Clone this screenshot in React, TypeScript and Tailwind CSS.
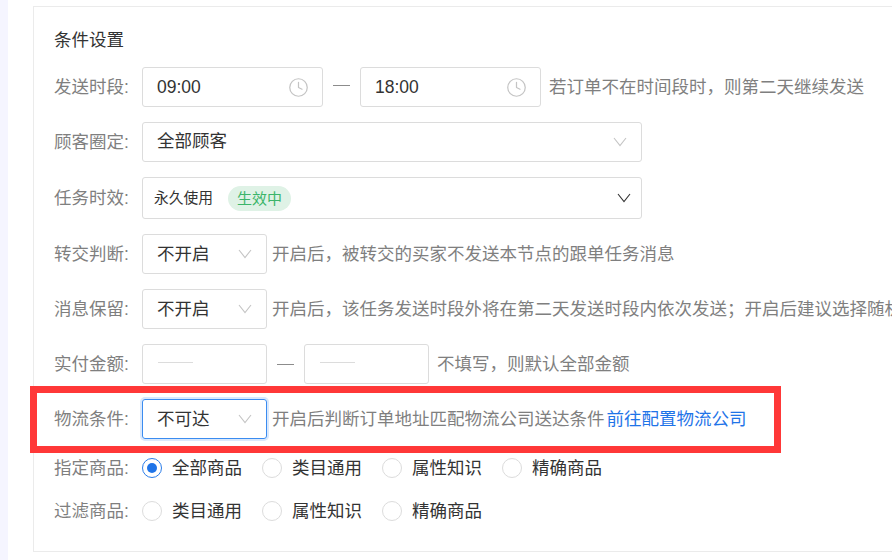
import { Clock } from "lucide-react";
import type { ReactNode } from "react";

const FONT = "font-['Liberation_Sans','Noto_Sans_CJK_SC',sans-serif]";

function Chevron({ className }: { className: string }) {
  return (
    <svg viewBox="0 0 14 10" fill="none" stroke="currentColor" className={`h-[10px] w-[14px] shrink-0 ${className}`}>
      <path d="M1 1l6 7.5L13 1" strokeWidth="1.1" />
    </svg>
  );
}

function Row({ label, children, className = "" }: { label: string; children: ReactNode; className?: string }) {
  return (
    <div className={`flex items-center ${className}`}>
      <span className="w-[88px] shrink-0 text-[#7f7f7f]">{label}:</span>
      {children}
    </div>
  );
}

function TimeInput({ value }: { value: string }) {
  return (
    <div className="flex h-10 w-[181px] items-center justify-between rounded-[3px] border border-[#dcdcdc] pl-[14px] pr-[13px] text-[#333]">
      {value}
      <Clock className="h-[21px] w-[21px] text-[#c4c4c4]" strokeWidth={1.4} />
    </div>
  );
}

function Select({ value, focused }: { value: string; focused?: boolean }) {
  return (
    <div
      className={`flex h-10 w-[125px] shrink-0 items-center justify-between rounded-[3px] border pl-[14px] pr-[14px] text-[#333] ${
        focused ? "border-[#3b8cf0] shadow-[0_0_0_2px_#d9e8fc]" : "border-[#dcdcdc]"
      }`}
    >
      {value}
      <Chevron className="text-[#c4c4c4]" />
    </div>
  );
}

function AmountInput() {
  return (
    <div className="flex h-10 w-[125px] items-center rounded-[3px] border border-[#dcdcdc] pl-[15px]">
      <div className="mb-1 h-px w-[35px] bg-[#dcdcdc]" />
    </div>
  );
}

function Radio({ label, checked, className }: { label: string; checked?: boolean; className: string }) {
  return (
    <div className={`flex items-center text-[#333] ${className}`}>
      {checked ? (
        <span className="mr-[10px] flex h-5 w-5 items-center justify-center rounded-full border border-[#2b7de9]">
          <span className="h-[10px] w-[10px] rounded-full bg-[#1f74e8]" />
        </span>
      ) : (
        <span className="mr-[10px] h-5 w-5 rounded-full border border-[#dcdcdc]" />
      )}
      {label}
    </div>
  );
}

export default function App() {
  return (
    <div className={`relative h-[560px] w-[892px] overflow-hidden bg-white text-[17.5px] ${FONT}`}>
      <div className="flex h-full">
        <div className="w-2 shrink-0 bg-[#f5f5ff]" />
        <div className="ml-[25px] mt-[6px] h-[546px] w-[900px] shrink-0 border border-[#ebebeb] pl-[20px]">
          <div className="mt-[21px] leading-6 text-[#333]">条件设置</div>

          <Row label="发送时段" className="mt-[15px]">
            <TimeInput value="09:00" />
            <span className="mx-[10px] mb-1 h-px w-[17px] bg-[#8c8c8c]" />
            <TimeInput value="18:00" />
            <span className="ml-2 text-[#7f7f7f]">若订单不在时间段时，则第二天继续发送</span>
          </Row>

          <Row label="顾客圈定" className="mt-[15px]">
            <div className="flex h-10 w-[500px] items-center justify-between rounded-[3px] border border-[#dcdcdc] pl-[14px] pr-[14px] text-[#333]">
              <span className="-mt-[2px]">全部顾客</span>
              <Chevron className="text-[#c4c4c4]" />
            </div>
          </Row>

          <Row label="任务时效" className="mt-[15px]">
            <div className="flex h-[42px] w-[500px] items-center rounded-[3px] border border-[#dcdcdc] pl-[11px] pr-[10px] text-[#333]">
              <span className="text-[14.75px]">永久使用</span>
              <span className="ml-[15px] rounded-full bg-[#dff2e6] px-[9px] text-[15px] leading-[25px] text-[#3bb56a]">生效中</span>
              <Chevron className="ml-auto text-[#333]" />
            </div>
          </Row>

          <Row label="转交判断" className="mt-[15px]">
            <Select value="不开启" />
            <span className="ml-[5px] text-[#7f7f7f]">开启后，被转交的买家不发送本节点的跟单任务消息</span>
          </Row>

          <Row label="消息保留" className="mt-[15px]">
            <Select value="不开启" />
            <span className="ml-[5px] whitespace-nowrap text-[#7f7f7f]">开启后，该任务发送时段外将在第二天发送时段内依次发送；开启后建议选择随机发送</span>
          </Row>

          <Row label="实付金额" className="mt-[15px]">
            <AmountInput />
            <span className="mx-[10px] mt-px h-px w-[17px] bg-[#8c8c8c]" />
            <AmountInput />
            <span className="ml-2 text-[#7f7f7f]">不填写，则默认全部金额</span>
          </Row>

          <Row label="物流条件" className="mt-[15px]">
            <Select value="不可达" focused />
            <span className="ml-[5px] text-[#7f7f7f]">开启后判断订单地址匹配物流公司送达条件</span>
            <a className="ml-[2px] text-[#1f74e8]">前往配置物流公司</a>
          </Row>

          <Row label="指定商品" className="mt-[16px]">
            <Radio label="全部商品" checked className="w-[120px]" />
            <Radio label="类目通用" className="w-[120px]" />
            <Radio label="属性知识" className="w-[120px]" />
            <Radio label="精确商品" className="w-[120px]" />
          </Row>

          <Row label="过滤商品" className="mt-[17px]">
            <Radio label="类目通用" className="w-[120px]" />
            <Radio label="属性知识" className="w-[120px]" />
            <Radio label="精确商品" className="w-[120px]" />
          </Row>
        </div>
      </div>
      {/* annotation drawn over the screenshot */}
      <div className="absolute left-[30px] top-[386px] h-[67px] w-[751px] border-[7px] border-[#ff3838]" />
    </div>
  );
}
